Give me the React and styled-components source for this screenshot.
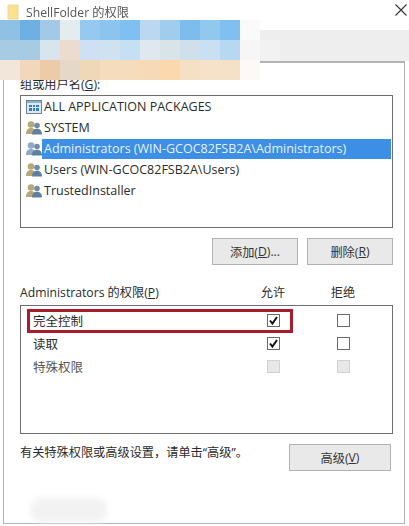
import styled, { createGlobalStyle } from "styled-components";

const MOSAIC = [
  ["#8ec1e4", "#6fb0e2", "#a3c9e6", "#e4ecef", "#96c9f0", "#8cc4ee", "#7fc0f0", "#bcd8f0", "#a0ccee", "#7dbdec", "#93c8ee", "#7fc0f0", "#fafafa", "transparent"],
  ["#a8cbe4", "#a8cbe4", "#d8e4ee", "#ecdccf", "#cfe0f2", "#cfe2f0", "#c5e0f2", "#dfe8ee", "#d8e4e8", "#cfe0ea", "#c8e0f2", "#b8d8f2", "#f6f6f6", "#f2f2f2"],
  ["#f2e6da", "#f2d8ba", "#eccba8", "#e6d8c8", "#eed8b8", "#f4dcbc", "#f5dcbc", "#f6dab8", "#fbd8ae", "#f5e0c4", "#f6e2c8", "#f5e2c6", "#fcfaf6", "transparent"],
];

const USERS = [
  { name: "SYSTEM", tone: "#b8a878" },
  { name: "Administrators (WIN-GCOC82FSB2A\\Administrators)", tone: "#8fa9c9", selected: true },
  { name: "Users (WIN-GCOC82FSB2A\\Users)", tone: "#b8a878" },
  { name: "TrustedInstaller", tone: "#b8a878" },
];

const PERMISSIONS = [
  { name: "完全控制", allow: "checked", deny: "empty" },
  { name: "读取", allow: "checked", deny: "empty" },
  { name: "特殊权限", allow: "disabled", deny: "disabled" },
];

const App = () => {
  return (
    <>
      <GlobalStyle />
      <Dialog>
        <TitleBar>
          <FolderIcon />
          <TitleText>ShellFolder 的权限</TitleText>
          <CloseIcon />
        </TitleBar>
        <TabStrip />
        <Panel>
          <FieldLabel>组或用户名(<u>G</u>):</FieldLabel>
          <ListBox>
            <ListRow>
              <PackagesIcon />
              <RowText>ALL APPLICATION PACKAGES</RowText>
            </ListRow>
            {USERS.map((user) => (
              <ListRow key={user.name}>
                <UsersIcon tone={user.tone} />
                <RowText $selected={user.selected}>{user.name}</RowText>
              </ListRow>
            ))}
          </ListBox>
          <ButtonRow>
            <Button>添加(<u>D</u>)...</Button>
            <Button>删除(<u>R</u>)</Button>
          </ButtonRow>
          <PermissionHead>
            <span>Administrators 的权限(<u>P</u>)</span>
            <ColumnTitle>允许</ColumnTitle>
            <ColumnTitle>拒绝</ColumnTitle>
          </PermissionHead>
          <PermissionBox>
            <Highlight />
            {PERMISSIONS.map((item) => (
              <PermissionRow key={item.name} $disabled={item.allow === "disabled"}>
                <span>{item.name}</span>
                <Checkbox state={item.allow} />
                <Checkbox state={item.deny} />
              </PermissionRow>
            ))}
          </PermissionBox>
          <FooterRow>
            <FooterText>有关特殊权限或高级设置，请单击“高级”。</FooterText>
            <AdvancedButton>高级(<u>V</u>)</AdvancedButton>
          </FooterRow>
          <BottomSmudge />
        </Panel>
        <Mosaic>
          {MOSAIC.flat().map((color, i) => (
            <MosaicCell key={i} $color={color} />
          ))}
        </Mosaic>
      </Dialog>
    </>
  );
};

export default App;

const FolderIcon = () => (
  <TitleSvg width="12" height="16" viewBox="0 0 12 16">
    <path d="M1 1h10v14H1z" fill="#fbe08e" stroke="#ecd9a0" />
  </TitleSvg>
);

const CloseIcon = () => (
  <CloseSvg width="12" height="12" viewBox="0 0 12 12">
    <path d="M.5.500l11 11M11.500.500l-11 11" stroke="#333" strokeWidth="1.1" fill="none" />
  </CloseSvg>
);

const PackagesIcon = () => (
  <RowSvg width="16" height="14" viewBox="0 0 16 14">
    <rect x=".5" y=".5" width="15" height="13" fill="#dfe9f2" stroke="#6d8296" />
    <rect x="1" y="1" width="14" height="2" fill="#8fb0cc" />
    <path d="M3 5h3v2H3zM7 5h2v2H7zM10 5h3v2h-3zM3 8h3v3H3zM7 8h2v3H7zM10 8h3v3h-3z" fill="#2f7fc4" />
  </RowSvg>
);

const UsersIcon = ({ tone }) => (
  <RowSvg width="16" height="14" viewBox="0 0 16 14">
    <circle cx="5" cy="3.500" r="3.300" fill={tone} />
    <path d="M0 13c0-4 2-6 5-6s5 2 5 6z" fill={tone} />
    <circle cx="11" cy="4.500" r="2.800" fill="#6f8ba6" />
    <path d="M6 13.500c0-3.600 2-5.700 5-5.700s5 2.100 5 5.700z" fill="#5f7f9f" />
  </RowSvg>
);

const Checkbox = ({ state }) => (
  <CheckBoxFrame $state={state}>
    {state === "checked" && (
      <svg width="11" height="11" viewBox="0 0 11 11">
        <path d="M2 5.500l2.400 3L9 2" stroke="#111" strokeWidth="2" fill="none" />
      </svg>
    )}
  </CheckBoxFrame>
);

const GlobalStyle = createGlobalStyle`
  html, body {
    margin: 0;
    padding: 0;
    background: #fff;
  }
  u {
    text-underline-offset: 1px;
  }
`;

const Dialog = styled.div`
  position: relative;
  width: 409px;
  height: 526px;
  overflow: hidden;
  display: flex;
  flex-direction: column;
  background: #fff;
  color: #2b2b2b;
  font-family: "Open Sans", "Noto Sans CJK SC", sans-serif;
  font-size: 12.2px;
`;

const TitleBar = styled.div`
  height: 30px;
  flex: none;
  display: flex;
  align-items: flex-start;
  padding: 4px 2px 0 7px;
  box-sizing: border-box;
`;

const TitleSvg = styled.svg`
  flex: none;
`;

const TitleText = styled.span`
  margin-left: 7px;
  font-size: 12.2px;
  line-height: 18px;
  color: #555;
  filter: blur(0.4px);
`;

const CloseSvg = styled.svg`
  margin-left: auto;
  flex: none;
`;

const TabStrip = styled.div`
  height: 31px;
  flex: none;
  background: #eeeeee;
`;

const Panel = styled.div`
  position: relative;
  flex: 1;
  margin: 0 4px 2px 3px;
  padding: 14px 11px 0 16px;
  box-sizing: border-box;
  border: 1px solid #b4b4b4;
  border-top: 2px solid #b4b4b4;
  background: #fff;
  display: flex;
  flex-direction: column;
`;

const FieldLabel = styled.div`
  line-height: 16px;
  height: 18px;
`;

const ListBox = styled.div`
  height: 133px;
  box-sizing: border-box;
  border: 1px solid #6e6e6e;
  padding: 0 1px 0 5px;
`;

const ListRow = styled.div`
  height: 21px;
  display: flex;
  align-items: center;
  font-size: 12.5px;
`;

const RowSvg = styled.svg`
  flex: none;
`;

const RowText = styled.span`
  flex: 1;
  height: 20px;
  line-height: 20px;
  padding-left: 2px;
  white-space: nowrap;
  background: ${(props) => (props.$selected ? "#3d8fe6" : "transparent")};
  color: ${(props) => (props.$selected ? "#e8f1fb" : "#2b2b2b")};
`;

const ButtonRow = styled.div`
  display: flex;
  justify-content: flex-end;
  gap: 9px;
  margin-top: 10px;
`;

const Button = styled.div`
  width: 86px;
  height: 27px;
  box-sizing: border-box;
  display: flex;
  align-items: center;
  justify-content: center;
  border: 1px solid #b2b2b2;
  background: #e9e9e9;
  font-size: 12.2px;
  color: #333;
`;

const AdvancedButton = styled(Button)`
  width: 102px;
  margin-right: 2px;
`;

const PermissionHead = styled.div`
  display: grid;
  grid-template-columns: 218px 70px 70px;
  margin-top: 19px;
  height: 21px;
  line-height: 18px;
`;

const ColumnTitle = styled.span`
  text-align: center;
`;

const PermissionBox = styled.div`
  position: relative;
  height: 129px;
  box-sizing: border-box;
  border: 1px solid #6e6e6e;
  padding-top: 3px;
`;

const Highlight = styled.div`
  position: absolute;
  left: 6px;
  top: 3px;
  width: 266px;
  height: 24px;
  box-sizing: border-box;
  border: 3px solid #a81c2c;
`;

const PermissionRow = styled.div`
  display: grid;
  grid-template-columns: 217px 70px 70px;
  align-items: center;
  justify-items: center;
  height: 23px;
  font-size: 12.5px;
  color: ${(props) => (props.$disabled ? "#555" : "#2b2b2b")};

  & > span {
    justify-self: start;
    padding-left: 12px;
  }
`;

const CheckBoxFrame = styled.div`
  width: 13px;
  height: 13px;
  box-sizing: border-box;
  display: flex;
  align-items: center;
  justify-content: center;
  border: 1px solid ${(props) => (props.$state === "disabled" ? "#d2d2d2" : "#6a6a6a")};
  background: ${(props) => (props.$state === "disabled" ? "#e8e8e8" : "#fff")};
`;

const FooterRow = styled.div`
  display: flex;
  justify-content: space-between;
  align-items: flex-start;
  margin-top: 10px;
`;

const FooterText = styled.span`
  line-height: 18px;
`;

const BottomSmudge = styled.div`
  position: absolute;
  left: 27px;
  bottom: 1px;
  width: 76px;
  height: 24px;
  border-radius: 10px;
  background: #f2f2f2;
  filter: blur(3px);
`;

const Mosaic = styled.div`
  position: absolute;
  left: 0;
  top: 20px;
  display: grid;
  grid-template-columns: repeat(14, 20px);
  grid-auto-rows: 20px;
`;

const MosaicCell = styled.div`
  background: ${(props) => props.$color};
`;
